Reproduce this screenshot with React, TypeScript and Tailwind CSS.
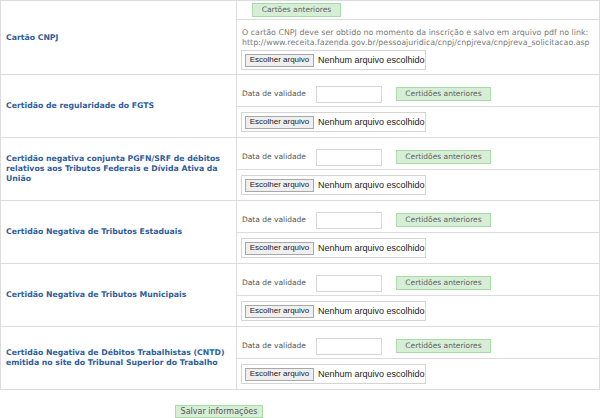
import React from "react";

const font = { fontFamily: '"DejaVu Sans", Verdana, sans-serif' };

function FileBox() {
  return (
    <div className="flex items-center h-[20px] w-[185px] border border-[#d4d4d4] pl-[3px] bg-white">
      <span
        className="flex items-center justify-center h-[13px] w-[69px] border border-[#a8a8a8] bg-[#efefef] text-[8px] text-[#222] leading-none"
        style={{ fontFamily: '"Liberation Sans", Arial, sans-serif' }}
      >
        Escolher arquivo
      </span>
      <span
        className="ml-[4px] text-[9px] text-[#222] leading-none whitespace-nowrap"
        style={{ fontFamily: '"Liberation Sans", Arial, sans-serif' }}
      >
        Nenhum arquivo escolhido
      </span>
    </div>
  );
}

function GreenButton({ label, w }: { label: string; w: string }) {
  return (
    <span
      className={`flex items-center justify-center h-[14px] ${w} bg-[#d5eed5] border border-[#a9dba9] text-[7.5px] text-[#5f5f5f] leading-none whitespace-nowrap`}
    >
      {label}
    </span>
  );
}

function Label({ children }: { children: React.ReactNode }) {
  return (
    <div className="w-[236px] shrink-0 border-r border-[#dcdcdc] flex items-center px-[5px] text-[7.75px] font-bold text-[#2f5e9a] leading-[9.8px] whitespace-nowrap">
      <div>{children}</div>
    </div>
  );
}

function CertRow({ label }: { label: React.ReactNode }) {
  return (
    <div className="flex h-[63px] border-b border-[#dcdcdc]">
      <Label>{label}</Label>
      <div className="flex-1 flex flex-col">
        <div className="h-[32px] border-b border-[#dcdcdc] flex items-center pt-[7px] pl-[4px]">
          <span className="w-[75px] pl-[1px] text-[7.5px] text-[#555] whitespace-nowrap">Data de validade</span>
          <span className="h-[17px] w-[66px] border border-[#d6d6d6] bg-white" />
          <span className="ml-[14px]">
            <GreenButton label="Certidões anteriores" w="w-[95px]" />
          </span>
        </div>
        <div className="flex-1 flex items-center pl-[4px]">
          <FileBox />
        </div>
      </div>
    </div>
  );
}

export default function App() {
  return (
    <div className="w-[600px] h-[418px] bg-white overflow-hidden" style={font}>
      <div className="w-[600px] border-t border-l border-r border-[#dcdcdc]">
        <div className="flex h-[74px] border-b border-[#dcdcdc]">
          <Label>Cartão CNPJ</Label>
          <div className="flex-1 flex flex-col">
            <div className="h-[19px] border-b border-[#dcdcdc] flex items-center pl-[15px]">
              <GreenButton label="Cartões anteriores" w="w-[89px]" />
            </div>
            <div className="flex-1 flex flex-col pt-[8px] pl-[4px]">
              <div className="pl-[1px] text-[7.9px] text-[#7a7a7a] leading-[10px] whitespace-nowrap">
                <div>O cartão CNPJ deve ser obtido no momento da inscrição e salvo em arquivo pdf no link:</div>
                <div>http://www.receita.fazenda.gov.br/pessoajuridica/cnpj/cnpjreva/cnpjreva_solicitacao.asp</div>
              </div>
              <div className="mt-[2px]">
                <FileBox />
              </div>
            </div>
          </div>
        </div>
        <CertRow label="Certidão de regularidade do FGTS" />
        <CertRow
          label={
            <>
              Certidão negativa conjunta PGFN/SRF de débitos
              <br />
              relativos aos Tributos Federais e Dívida Ativa da
              <br />
              União
            </>
          }
        />
        <CertRow label="Certidão Negativa de Tributos Estaduais" />
        <CertRow label="Certidão Negativa de Tributos Municipais" />
        <CertRow
          label={
            <>
              Certidão Negativa de Débitos Trabalhistas (CNTD)
              <br />
              emitida no site do Tribunal Superior do Trabalho
            </>
          }
        />
      </div>
      <div className="mt-[15px] ml-[175px]">
        <span className="flex items-center justify-center h-[13px] w-[88px] bg-[#d5eed5] border border-[#a9dba9] text-[8px] text-[#555] leading-none whitespace-nowrap">
          Salvar informações
        </span>
      </div>
    </div>
  );
}
